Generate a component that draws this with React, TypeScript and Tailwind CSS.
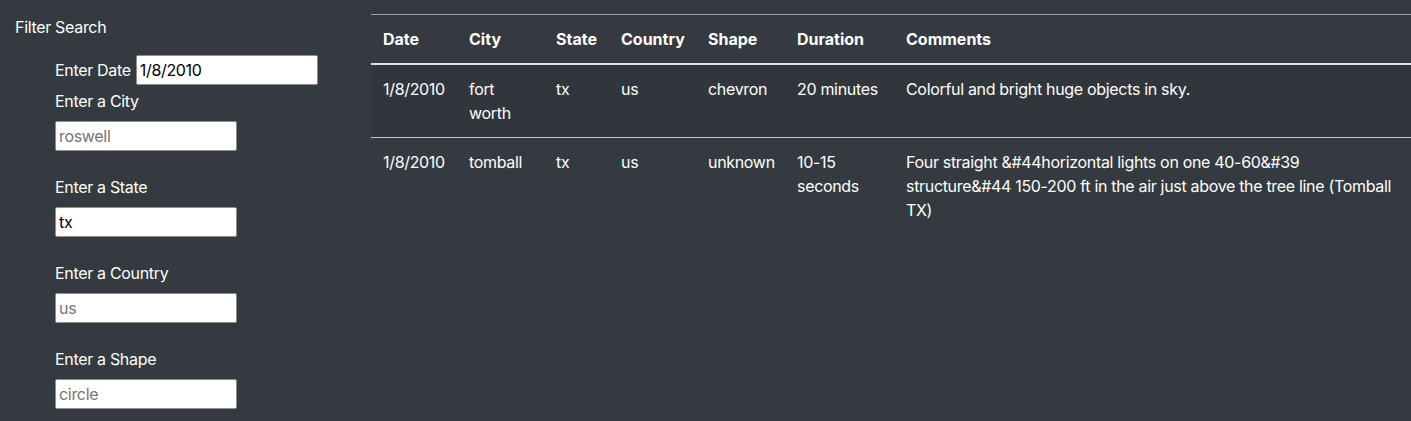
import React from 'react';

interface Sighting {
  datetime: string;
  city: string;
  state: string;
  country: string;
  shape: string;
  duration: string;
  comments: string;
}

const sightings: Sighting[] = [
  {
    datetime: '1/8/2010',
    city: 'fort worth',
    state: 'tx',
    country: 'us',
    shape: 'chevron',
    duration: '20 minutes',
    comments: 'Colorful and bright huge objects in sky.',
  },
  {
    datetime: '1/8/2010',
    city: 'tomball',
    state: 'tx',
    country: 'us',
    shape: 'unknown',
    duration: '10-15 seconds',
    comments:
      'Four straight &#44horizontal lights on one 40-60&#39 structure&#44 150-200 ft in the air just above the tree line (Tomball TX)',
  },
];

const inputClass =
  'w-[182px] h-[30px] bg-white border border-[#8f8f8f] rounded-[2px] px-[3px] text-[16px] text-black placeholder:text-[#757575] outline-none';

const FilterField: React.FC<{ label: string; placeholder?: string; value?: string }> = ({
  label,
  placeholder,
  value,
}) => (
  <li className="flex flex-col mb-[24px]">
    <label className="leading-6 mb-[8px]">{label}</label>
    <input type="text" className={inputClass} placeholder={placeholder} defaultValue={value} />
  </li>
);

const App: React.FC = () => {
  return (
    <div
      className="min-h-[421px] bg-[#343a40] text-white text-[16px] leading-6 tracking-[-0.32px] flex"
      style={{ fontFamily: 'Inter, "Noto Sans", sans-serif' }}
    >
      {/* Sidebar filters */}
      <aside className="w-[371px] shrink-0 pl-[15px] pt-[15px]">
        <h5 className="leading-6">Filter Search</h5>
        <ul className="pl-[40px] mt-[16px]">
          <li className="flex items-center mb-[4px]">
            <label className="mr-[5px]">Enter Date</label>
            <input type="text" className={inputClass + ' h-[29px]'} defaultValue="1/8/2010" />
          </li>
          <FilterField label="Enter a City" placeholder="roswell" />
          <FilterField label="Enter a State" value="tx" />
          <FilterField label="Enter a Country" placeholder="us" />
          <FilterField label="Enter a Shape" placeholder="circle" />
        </ul>
      </aside>

      {/* Results table */}
      <div className="flex-1 pt-[14px]">
        <table className="w-full table-fixed border-collapse">
          <colgroup>
            <col className="w-[86px]" />
            <col className="w-[87px]" />
            <col className="w-[65px]" />
            <col className="w-[87px]" />
            <col className="w-[89px]" />
            <col className="w-[109px]" />
            <col />
          </colgroup>
          <thead>
            <tr className="border-t border-[#9ea3a8] border-b-2 border-b-[#dee2e6]">
              {['Date', 'City', 'State', 'Country', 'Shape', 'Duration', 'Comments'].map((h) => (
                <th key={h} className="p-3 text-left font-bold tracking-normal align-bottom">
                  {h}
                </th>
              ))}
            </tr>
          </thead>
          <tbody>
            {sightings.map((s, i) => (
              <tr
                key={i}
                className={
                  (i === 0 ? 'bg-[#31363c] ' : '') + (i > 0 ? 'border-t border-[#c5c9cd]' : '')
                }
              >
                <td className="p-3 align-top">{s.datetime}</td>
                <td className="p-3 align-top">{s.city}</td>
                <td className="p-3 align-top">{s.state}</td>
                <td className="p-3 align-top">{s.country}</td>
                <td className="p-3 align-top">{s.shape}</td>
                <td className="p-3 align-top">{s.duration}</td>
                <td className="p-3 align-top">{s.comments}</td>
              </tr>
            ))}
          </tbody>
        </table>
      </div>
    </div>
  );
};

export default App;
